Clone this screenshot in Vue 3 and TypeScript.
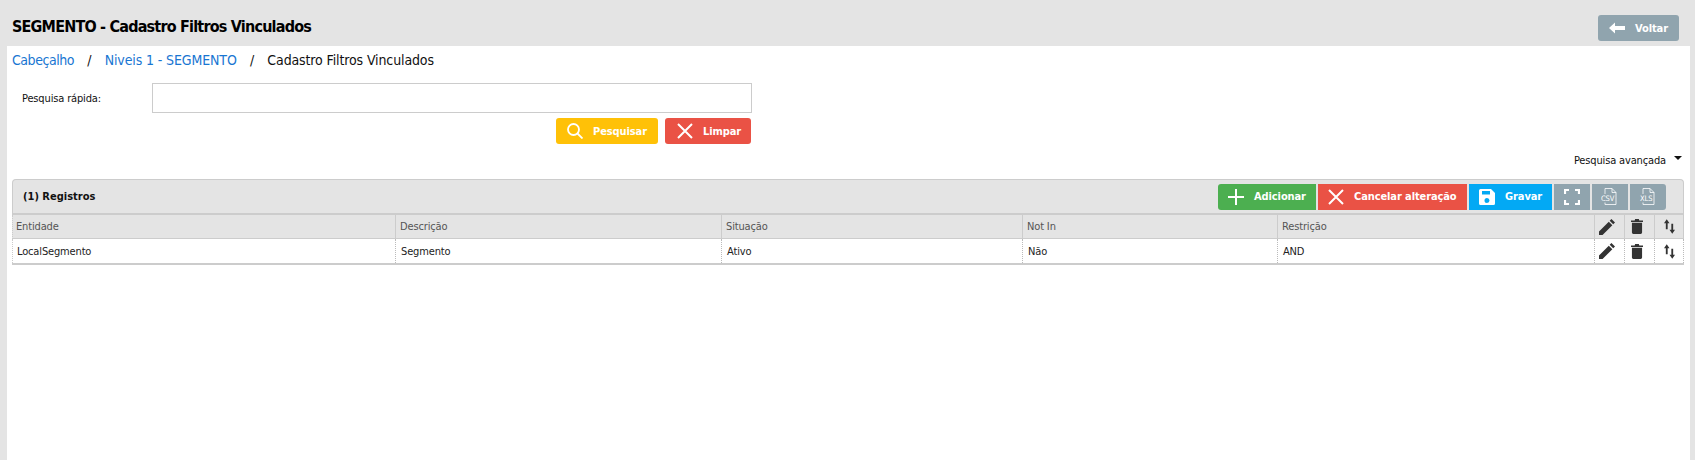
<script setup lang="ts">
const columns = [
  { head: 'Entidade', value: 'LocalSegmento' },
  { head: 'Descrição', value: 'Segmento' },
  { head: 'Situação', value: 'Ativo' },
  { head: 'Not In', value: 'Não' },
  { head: 'Restrição', value: 'AND' },
]
</script>

<template>
  <div class="page">
    <header class="top">
      <h1>SEGMENTO - Cadastro Filtros Vinculados</h1>
      <button class="btn grey back">
        <svg width="16" height="12" viewBox="0 0 16 12"><path d="M0 6 6 .5v3.500h10v4H6v3.500z" fill="#fff" /></svg>
        <span>Voltar</span>
      </button>
    </header>

    <main class="content">
      <nav class="crumbs">
        <a class="first">Cabeçalho</a><i>/</i><a>Niveis 1 - SEGMENTO</a><i>/</i><span>Cadastro Filtros Vinculados</span>
      </nav>

      <section class="search">
        <div class="search-row">
          <label>Pesquisa rápida:</label>
          <div class="field"></div>
        </div>
        <div class="search-actions">
          <button class="btn yellow pesq">
            <svg width="16" height="16" viewBox="0 0 16 16" fill="none" stroke="#fff" stroke-width="1.800"><circle cx="6.500" cy="6.500" r="5.500" /><path d="m10.500 10.500 5 5" /></svg>
            <span>Pesquisar</span>
          </button>
          <button class="btn red limpar">
            <svg width="16" height="16" viewBox="0 0 16 16" fill="none" stroke="#fff" stroke-width="2"><path d="m1 1 14 14M15 1 1 15" /></svg>
            <span>Limpar</span>
          </button>
        </div>
      </section>

      <div class="advanced">
        <span>Pesquisa avançada</span>
        <b class="caret"></b>
      </div>

      <section class="panel">
        <div class="panel-head">
          <strong>(1) Registros</strong>
          <div class="tools">
            <button class="btn green add">
              <svg width="16" height="16" viewBox="0 0 16 16" fill="none" stroke="#fff" stroke-width="2"><path d="M8 0v16M0 8h16" /></svg>
              <span>Adicionar</span>
            </button>
            <button class="btn red cancel">
              <svg width="16" height="16" viewBox="0 0 16 16" fill="none" stroke="#fff" stroke-width="2"><path d="m1 1 14 14M15 1 1 15" /></svg>
              <span>Cancelar alteração</span>
            </button>
            <button class="btn blue save">
              <svg width="16" height="16" viewBox="0 0 16 16"><path fill-rule="evenodd" d="M1.500 0H12l4 4v10.500a1.500 1.500 0 0 1-1.500 1.500h-13A1.500 1.500 0 0 1 0 14.500v-13A1.500 1.500 0 0 1 1.500 0zM3 2v3.500h8V2zm5 7a2.500 2.500 0 1 0 0 5 2.500 2.500 0 0 0 0-5z" fill="#fff" /></svg>
              <span>Gravar</span>
            </button>
            <button class="btn grey icon">
              <svg width="16" height="16" viewBox="0 0 16 16" fill="none" stroke="#fff" stroke-width="2.200"><path d="M1 5V1h4M11 1h4v4M15 11v4h-4M5 15H1v-4" /></svg>
            </button>
            <button class="btn grey icon">
              <svg width="18" height="17" viewBox="0 0 18 17" fill="none" stroke="#fff" stroke-width=".8"><path d="M4 6V.500h7l4 4V16.500H4v-2M11 .500v4h4" /><text x="0" y="13" class="mini">CSV</text></svg>
            </button>
            <button class="btn grey icon">
              <svg width="18" height="17" viewBox="0 0 18 17" fill="none" stroke="#fff" stroke-width=".8"><path d="M4 6V.500h7l4 4V16.500H4v-2M11 .500v4h4" /><text x="1" y="13" class="mini">XLS</text></svg>
            </button>
          </div>
        </div>

        <div class="grid">
          <div v-for="c in columns" :key="c.head" class="th">{{ c.head }}</div>
          <div class="th ic pen-cell">
            <svg class="pen" viewBox="0 0 18 18"><path d="M0 18v-4L11 3l4 4L4 18zM12 2l2-2 4 4-2 2z" /></svg>
          </div>
          <div class="th ic bin-cell">
            <svg class="bin" viewBox="0 0 13 16"><path d="M0 1.500h4L4.500 0h4L9 1.500h4V3H0zM1 4h11v10.500a1.500 1.500 0 0 1-1.500 1.500h-8A1.500 1.500 0 0 1 1 14.500z" /></svg>
          </div>
          <div class="th ic">
            <svg class="sort" viewBox="0 0 12 16"><path d="M3 0l3 4.500H4V11H2V4.500H0zM9 16l3-4.500h-2V5H8v6.500H6z" /></svg>
          </div>

          <div v-for="c in columns" :key="c.value" class="td">{{ c.value }}</div>
          <div class="td ic pen-cell">
            <svg class="pen" viewBox="0 0 18 18"><path d="M0 18v-4L11 3l4 4L4 18zM12 2l2-2 4 4-2 2z" /></svg>
          </div>
          <div class="td ic bin-cell">
            <svg class="bin" viewBox="0 0 13 16"><path d="M0 1.500h4L4.500 0h4L9 1.500h4V3H0zM1 4h11v10.500a1.500 1.500 0 0 1-1.500 1.500h-8A1.500 1.500 0 0 1 1 14.500z" /></svg>
          </div>
          <div class="td ic">
            <svg class="sort" viewBox="0 0 12 16"><path d="M3 0l3 4.500H4V11H2V4.500H0zM9 16l3-4.500h-2V5H8v6.500H6z" /></svg>
          </div>
        </div>
      </section>
    </main>
  </div>
</template>

<style>
html, body { margin: 0; background: #e4e4e4; }
</style>

<style scoped>
.page {
  width: 1695px;
  height: 460px;
  overflow: hidden;
  background: #e4e4e4;
  font-family: "DejaVu Sans", Verdana, sans-serif;
  font-stretch: condensed;
  color: #111;
  font-size: 11px;
  letter-spacing: -0.15px;
}
.top {
  height: 46px;
  box-sizing: border-box;
  display: flex;
  justify-content: space-between;
  padding: 15px 16px 0 12px;
}
h1 {
  margin: 2px 0 0;
  font-size: 16px;
  line-height: 20px;
  font-weight: 700;
  color: #000;
  letter-spacing: -0.8px;
}
.content {
  margin: 0 5px 0 7px;
  height: 414px;
  background: #fff;
  padding: 5px 6px 0 5px;
  box-sizing: border-box;
}
.crumbs {
  font-size: 14px;
  line-height: 18px;
  display: flex;
  letter-spacing: -0.12px;
}
.crumbs a { color: #1976d2; }
.crumbs a.first { letter-spacing: -0.45px; }
.crumbs i { font-style: normal; margin: 0 13.250px; }
.search { width: 740px; margin-top: 14px; }
.search-row { display: flex; align-items: center; height: 30px; }
.search-row label { width: 140px; padding-left: 10px; box-sizing: border-box; }
.field {
  width: 600px;
  height: 30px;
  box-sizing: border-box;
  border: 1px solid #ccc;
}
.search-actions {
  display: flex;
  justify-content: flex-end;
  gap: 7px;
  margin: 5px 1px 0 0;
}
.btn {
  display: flex;
  align-items: center;
  border: 0;
  padding: 0;
  color: #fff;
  font: inherit;
  font-weight: 700;
  letter-spacing: -0.1px;
  height: 26px;
  box-sizing: border-box;
}
.mini {
  font-family: "DejaVu Sans", sans-serif;
  font-size: 7.500px;
  font-weight: 400;
  fill: #fff;
  stroke: none;
}
.grey { background: #90a4ae; }
.yellow { background: #ffc107; }
.red { background: #ea5245; }
.green { background: #4caf50; }
.blue { background: #03a9f4; }
.back { width: 81px; border-radius: 3px; padding-left: 11px; gap: 10px; }
.pesq { width: 102px; border-radius: 3px; padding-left: 11px; gap: 10px; }
.limpar { width: 86px; border-radius: 3px; padding-left: 12px; gap: 10px; }
.advanced {
  display: flex;
  justify-content: flex-end;
  align-items: center;
  height: 16px;
  margin-top: 8px;
  padding-right: 2px;
}
.caret {
  width: 0;
  height: 0;
  border-left: 4px solid transparent;
  border-right: 4px solid transparent;
  border-top: 4px solid #111;
  margin: 0 0 5px 8px;
}
.panel { margin-top: 11px; }
.panel-head {
  height: 34px;
  box-sizing: border-box;
  background: #e4e4e4;
  border: 1px solid #ccc;
  border-bottom: 0;
  border-radius: 4px 4px 0 0;
  display: flex;
  align-items: center;
  justify-content: space-between;
  padding: 0 17px 0 10px;
}
.panel-head strong { font-weight: 700; letter-spacing: 0; }
.tools { display: flex; gap: 2px; }
.add { width: 98px; padding-left: 10px; gap: 10px; border-radius: 3px 0 0 3px; }
.cancel { width: 149px; padding-left: 10px; gap: 10px; }
.save { width: 83px; padding-left: 10px; gap: 10px; }
.icon { width: 36px; justify-content: center; }
.tools .icon:last-child { border-radius: 0 3px 3px 0; }
.grid {
  display: grid;
  grid-template-columns: 384px 326px 301px 255px 317px 30px 30px 29px;
  border-top: 2px solid #ccc;
  border-bottom: 2px solid #ccc;
}
.th {
  height: 24px;
  background: #e4e4e4;
  color: #555;
  border-right: 1px solid #ccc;
  border-bottom: 1px solid #ccc;
  padding-left: 4px;
  box-sizing: border-box;
  display: flex;
  align-items: center;
}
.td {
  height: 24px;
  background: #fff;
  border-right: 1px dotted #bbb;
  padding-left: 5px;
  box-sizing: border-box;
  display: flex;
  align-items: center;
  color: #222;
}
.th:first-child { border-left: 1px dotted #ccc; padding-left: 3px; }
.td:nth-child(9) { border-left: 1px dotted #ccc; padding-left: 4px; }
.ic { padding: 0; justify-content: center; }
.pen-cell, .bin-cell { padding-right: 5px; }
.pen { width: 16px; height: 16px; fill: #333; }
.bin { width: 12px; height: 15px; fill: #333; }
.sort { width: 11px; height: 15px; fill: #333; }
</style>
